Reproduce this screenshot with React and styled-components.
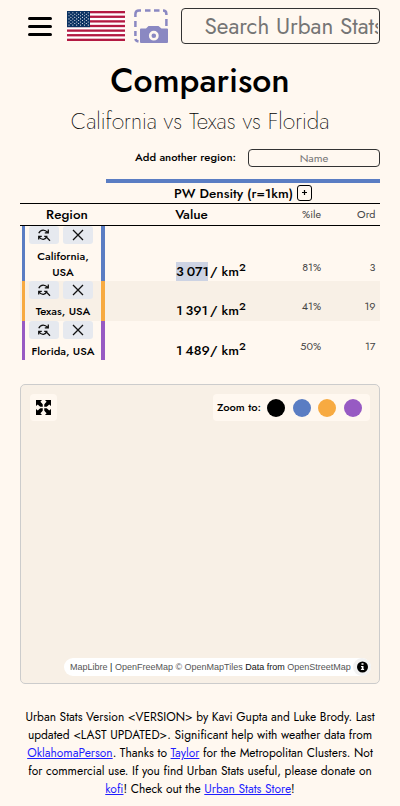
import React from 'react';
import styled, { createGlobalStyle } from 'styled-components';

const BLUE = '#5a7dc3';
const ORANGE = '#f7aa41';
const PURPLE = '#975ac3';
const CREAM = '#fff8f0';
const SAND = '#f8f0e6';

const Global = createGlobalStyle`
  * { box-sizing: border-box; }
  body {
    margin: 0;
    background: ${CREAM};
    color: #000;
    font-family: Jost, Lato, sans-serif;
  }
`;

const Page = styled.div`
  width: 400px;
  height: 806px;
  padding: 8px 20px 0;
  overflow: hidden;
`;

const Header = styled.header`
  display: flex;
  height: 36px;
  align-items: flex-start;
`;
const Burger = styled.div`
  display: flex;
  flex-direction: column;
  gap: 5px;
  width: 24px;
  margin: 9px 15px 0 8px;
`;
const Bar = styled.i`
  height: 3px;
  border-radius: 2px;
  background: #000;
`;
const Flag = styled.svg`
  width: 58px;
  height: 30px;
  margin: 3px 9px 0 0;
`;
const Camera = styled.svg`
  width: 34px;
  height: 34px;
  margin: 1px 13px 0 0;
`;
const Search = styled.input`
  width: 199px;
  height: 36px;
  margin: 0;
  padding: 0 1px 0 22.5px;
  border: 1px solid #333;
  border-radius: 4px;
  outline: none;
  background: transparent;
  font-family: inherit;
  font-size: 22.5px;
  &::placeholder {
    color: #757575;
    opacity: 1;
  }
`;

const Title = styled.h1`
  margin: 16px 0 0;
  height: 42px;
  line-height: 42px;
  text-align: center;
  font-size: 33.75px;
  font-weight: 500;
`;
const Subtitle = styled.h2`
  margin: 0;
  height: 40px;
  line-height: 39px;
  text-align: center;
  white-space: nowrap;
  font-size: 22.5px;
  font-weight: 200;
`;

const AddRow = styled.div`
  display: flex;
  justify-content: flex-end;
  align-items: center;
  gap: 12px;
  height: 18px;
  margin-top: 7px;
`;
const AddLabel = styled.span`
  padding-bottom: 2px;
  font-size: 11.25px;
  font-weight: 500;
`;
const NameInput = styled.div`
  width: 132px;
  height: 18px;
  border: 1px solid #333;
  border-radius: 4px;
  text-align: center;
  font-size: 11.25px;
  line-height: 17px;
  color: #757575;
`;

const Table = styled.section`
  margin-top: 12px;
`;
const StatHeading = styled.div`
  display: flex;
  justify-content: center;
  align-items: center;
  gap: 4px;
  height: 24px;
  margin-left: 86px;
  border-top: 4px solid ${BLUE};
  font-size: 13.5px;
  font-weight: 500;
  white-space: nowrap;
`;
const Expand = styled.svg`
  width: 15px;
  height: 16px;
`;
const grid = `
  display: grid;
  grid-template-columns: 86px 171px 46px 57px;
`;
const ColumnHeads = styled.div`
  ${grid}
  height: 23px;
  border: solid #000;
  border-width: 1px 0;
  align-items: center;
  text-align: center;
  font-size: 13.5px;
  font-weight: 500;
`;
const RegionHead = styled.span`
  padding-left: 8px;
`;
const Small = styled.span`
  font-size: 10.8px;
  font-weight: 400;
  color: #444;
  text-align: right;
  padding-right: ${(p) => p.$pad}px;
  padding-bottom: 1px;
`;
const Row = styled.div`
  ${grid}
  height: ${(p) => p.$h}px;
  background: ${(p) => (p.$striped ? SAND : CREAM)};
`;
const RegionCell = styled.div`
  display: flex;
  flex-direction: column;
  align-items: center;
  width: 83px;
  margin-left: 2px;
  border-left: 3px solid ${(p) => p.$color};
  border-right: 4px solid ${(p) => p.$color};
`;
const Buttons = styled.div`
  display: flex;
  gap: 4px;
  align-self: flex-start;
  margin-left: 4px;
`;
const IconButton = styled.div`
  display: flex;
  align-items: center;
  justify-content: center;
  width: 30px;
  height: 18px;
  border-radius: 3px;
  background: #e6e9ef;
`;
const Icon = styled.svg`
  width: ${(p) => p.$s}px;
  height: ${(p) => p.$s}px;
  fill: none;
  stroke: #111;
`;
const RegionName = styled.div`
  margin-top: 4px;
  text-align: center;
  white-space: pre-line;
  font-size: 11.25px;
  font-weight: 500;
  line-height: 16px;
`;
const ValueCell = styled.div`
  align-self: end;
  display: flex;
  justify-content: flex-end;
  height: 20px;
  margin-bottom: ${(p) => p.$up}px;
  padding-right: 31px;
  font-size: 13.5px;
  font-weight: 500;
  line-height: 20px;
  white-space: nowrap;
`;
const Figure = styled.span`
  height: 19px;
  width: 32px;
  text-align: right;
  background: ${(p) => (p.$marked ? '#cdd3e3' : 'transparent')};
  word-spacing: -1.2px;
`;
const Unit = styled.span`
  width: 38px;
  padding-left: 2px;
`;
const Sup = styled.span`
  display: inline-block;
  transform: translateY(-5px);
  font-size: 11.25px;
`;
const Stat = styled(Small)`
  align-self: end;
  height: 20px;
  line-height: 20px;
  margin-bottom: ${(p) => p.$up}px;
`;

const Map = styled.section`
  display: flex;
  flex-direction: column;
  justify-content: space-between;
  height: 300px;
  margin-top: 24px;
  padding: 9px 9px 7px;
  border: 1px solid #ccc;
  border-radius: 5px;
  background: ${SAND};
`;
const MapTop = styled.div`
  display: flex;
  justify-content: space-between;
`;
const MapButton = styled.div`
  display: flex;
  align-items: center;
  justify-content: center;
  width: 27px;
  height: 27px;
  border-radius: 4px;
  background: ${CREAM};
`;
const ZoomPanel = styled.div`
  display: flex;
  align-items: center;
  gap: 7.6px;
  width: 157px;
  height: 27px;
  padding-left: 4px;
  border-radius: 4px;
  background: ${CREAM};
  font-size: 11.25px;
  font-weight: 500;
`;
const ZoomLabel = styled.span`
  width: 42.5px;
  padding-bottom: 1px;
  white-space: nowrap;
`;
const Dot = styled.i`
  width: 18px;
  height: 18px;
  flex: none;
  border-radius: 50%;
  background: ${(p) => p.$color};
`;
const Attribution = styled.div`
  align-self: flex-end;
  display: flex;
  align-items: center;
  justify-content: space-between;
  width: 307px;
  height: 18px;
  margin-right: -1px;
  padding-left: 6px;
  border-radius: 9px;
  background: #fff;
  white-space: nowrap;
  font: 9px/17px "Liberation Sans", Arial, sans-serif;
  color: #111;
`;
const Source = styled.span`
  color: #555;
`;
const Info = styled.svg`
  width: 18px;
  height: 18px;
`;

const Footer = styled.footer`
  margin-top: 24px;
  text-align: center;
  font-size: 12px;
  line-height: 18px;
`;
const Line = styled.div`
  white-space: nowrap;
`;
const Link = styled.a`
  color: #1f1fff;
  text-decoration: underline;
`;

const stars = [];
for (let r = 0; r < 9; r++) {
  for (let c = 0; c < (r % 2 ? 5 : 6); c++) {
    stars.push([2 + c * 3.85 + (r % 2 ? 1.92 : 0), 1.7 + r * 1.55]);
  }
}

function UsFlag() {
  return (
    <Flag viewBox="0 0 58 30">
      <rect width="58" height="30" fill="#fff" />
      {[0, 1, 2, 3, 4, 5, 6].map((i) => (
        <rect key={i} y={(i * 60) / 13} width="58" height={30 / 13} fill="#b31942" />
      ))}
      <rect width="23" height="16.15" fill="#0a3161" />
      {stars.map(([x, y]) => (
        <circle key={`${x}-${y}`} cx={x} cy={y} r=".55" fill="#fff" />
      ))}
    </Flag>
  );
}

const rows = [
  { name: 'California,\nUSA', value: '3 071', pct: '81%', ord: '3', color: BLUE, h: 55, marked: true, up: -1 },
  { name: 'Texas, USA', value: '1 391', pct: '41%', ord: '19', color: ORANGE, h: 40, striped: true, up: 0 },
  { name: 'Florida, USA', value: '1 489', pct: '50%', ord: '17', color: PURPLE, h: 39, up: -1 },
];

export default function App() {
  return (
    <Page>
      <Global />
      <Header>
        <Burger><Bar /><Bar /><Bar /></Burger>
        <UsFlag />
        <Camera viewBox="0 0 34 34">
          <path
            d="M1.4 8V5Q1.4 1.4 5 1.4H7M11 1.4H16.5M20 1.4H25.5M29 1.4Q32.4 1.4 32.4 5V6M32.4 10V17M1.4 12V18M1.4 22V27M1.4 30Q1.8 32 4.5 32.5"
            fill="none" stroke="#8a88c2" strokeWidth="2.5"
          />
          <path d="M7 19.5H12L14.5 17H24.5L27.5 19.5H33Q34 19.5 34 20.5V33Q34 34 33 34H7Q6 34 6 33V20.5Q6 19.5 7 19.5Z" fill="#8a88c2" />
          <circle cx="19.8" cy="26.7" r="3.6" fill="none" stroke={CREAM} strokeWidth="2.6" />
        </Camera>
        <Search placeholder="Search Urban Stats" />
      </Header>

      <Title>Comparison</Title>
      <Subtitle>California vs Texas vs Florida</Subtitle>

      <AddRow>
        <AddLabel>Add another region:</AddLabel>
        <NameInput>Name</NameInput>
      </AddRow>

      <Table>
        <StatHeading>
          <span>PW Density (r=1km)</span>
          <Expand viewBox="0 0 15 16">
            <rect x=".5" y=".5" width="14" height="15" rx="2.5" fill="none" stroke="#000" />
            <path d="M5 7.5H10M7.5 5V10" stroke="#000" strokeWidth="1.2" />
          </Expand>
        </StatHeading>
        <ColumnHeads>
          <RegionHead>Region</RegionHead>
          <span>Value</span>
          <Small $pad={2}>%ile</Small>
          <Small $pad={4.5}>Ord</Small>
        </ColumnHeads>
        {rows.map((r) => (
          <Row key={r.value} $h={r.h} $striped={r.striped}>
            <RegionCell $color={r.color}>
              <Buttons>
                <IconButton>
                  <Icon $s={14} viewBox="0 0 14 14" strokeWidth="1.25">
                    <path d="M1.8 5.2Q3 2 6.2 2Q8.5 2 10.8 4.4M11.3 1.5V4.8H7.8M1.7 11.6V8.4H4.8M2 8.8Q4 11.6 6.5 11.3Q9 11 9.6 8.5M7.2 8.3H9.8V9.5L13 12.8" />
                  </Icon>
                </IconButton>
                <IconButton>
                  <Icon $s={12} viewBox="0 0 12 12" strokeWidth="1.3">
                    <path d="M1 1L11 11M11 1L1 11" />
                  </Icon>
                </IconButton>
              </Buttons>
              <RegionName>{r.name}</RegionName>
            </RegionCell>
            <ValueCell $up={r.up}>
              <Figure $marked={r.marked}>{r.value}</Figure>
              <Unit>/ km<Sup>2</Sup></Unit>
            </ValueCell>
            <Stat $pad={2} $up={r.up + 5}>{r.pct}</Stat>
            <Stat $pad={4.5} $up={r.up + 5}>{r.ord}</Stat>
          </Row>
        ))}
      </Table>

      <Map>
        <MapTop>
          <MapButton>
            <svg width="15" height="15" viewBox="0 0 15 15">
              <path
                d="M0 0H6L4.4 1.8L7.5 4.9L10.6 1.8L9 0H15V6L13.2 4.4L10.1 7.5L13.2 10.6L15 9V15H9L10.6 13.2L7.5 10.1L4.4 13.2L6 15H0V9L1.8 10.6L4.9 7.5L1.8 4.4L0 6Z"
              />
              <path d="M7.5 3V12M3 7.5H12" stroke={CREAM} strokeWidth="1.5" />
            </svg>
          </MapButton>
          <ZoomPanel>
            <ZoomLabel>Zoom to:</ZoomLabel>
            <Dot $color="#000" />
            <Dot $color={BLUE} />
            <Dot $color={ORANGE} />
            <Dot $color={PURPLE} />
          </ZoomPanel>
        </MapTop>
        <Attribution>
          <span>
            <Source>MapLibre</Source> | <Source>OpenFreeMap © OpenMapTiles</Source> Data from <Source>OpenStreetMap</Source>
          </span>
          <Info viewBox="0 0 18 18">
            <circle cx="9" cy="9" r="9" fill="#f2f2f2" />
            <circle cx="9.5" cy="9" r="5.5" />
            <path d="M8.5 5.2H10.5V6.8H8.5ZM8 8H10.5V11H11.1V12H7.9V11H8.7V9H8Z" fill="#fff" />
          </Info>
        </Attribution>
      </Map>

      <Footer>
        <Line>Urban Stats Version &lt;VERSION&gt; by Kavi Gupta and Luke Brody. Last</Line>
        <Line>updated &lt;LAST UPDATED&gt;. Significant help with weather data from</Line>
        <Line><Link>OklahomaPerson</Link>. Thanks to <Link>Taylor</Link> for the Metropolitan Clusters. Not</Line>
        <Line>for commercial use. If you find Urban Stats useful, please donate on</Line>
        <Line><Link>kofi</Link>! Check out the <Link>Urban Stats Store</Link>!</Line>
      </Footer>
    </Page>
  );
}
